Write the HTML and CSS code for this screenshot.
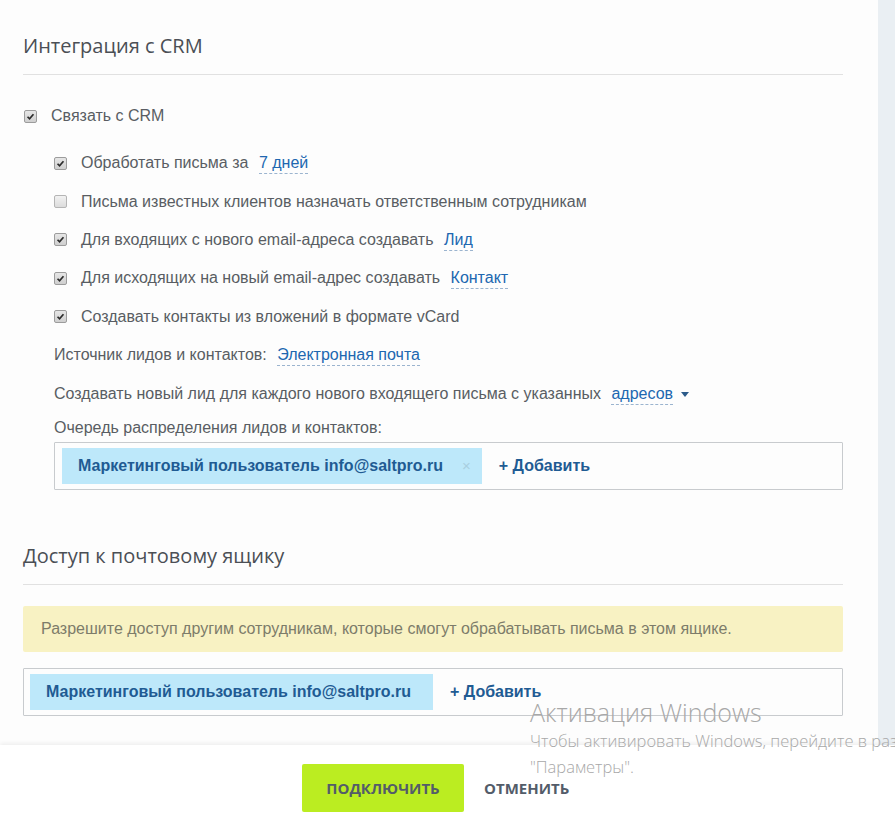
FILE: index.html
```html
<!DOCTYPE html>
<html lang="ru">
<head>
<meta charset="utf-8">
<title>Интеграция с CRM</title>
<link rel="stylesheet" href="styles.css">
</head>
<body>
<div class="page">
  <div class="top">
    <main class="content">
      <h2 class="section-title">Интеграция с CRM</h2>

      <div class="row main-row">
        <span class="cb checked"><svg viewBox="0 0 13 13"><path d="M3 6.8 L5.4 9.2 L10 3.8" /></svg></span>
        <span>Связать с CRM</span>
      </div>

      <div class="sub">
        <div class="row">
          <span class="cb checked"><svg viewBox="0 0 13 13"><path d="M3 6.8 L5.4 9.2 L10 3.8" /></svg></span>
          <span>Обработать письма за <a class="link">7 дней</a></span>
        </div>
        <div class="row">
          <span class="cb"></span>
          <span>Письма известных клиентов назначать ответственным сотрудникам</span>
        </div>
        <div class="row">
          <span class="cb checked"><svg viewBox="0 0 13 13"><path d="M3 6.8 L5.4 9.2 L10 3.8" /></svg></span>
          <span>Для входящих с нового email-адреса создавать <a class="link">Лид</a></span>
        </div>
        <div class="row">
          <span class="cb checked"><svg viewBox="0 0 13 13"><path d="M3 6.8 L5.4 9.2 L10 3.8" /></svg></span>
          <span>Для исходящих на новый email-адрес создавать <a class="link">Контакт</a></span>
        </div>
        <div class="row">
          <span class="cb checked"><svg viewBox="0 0 13 13"><path d="M3 6.8 L5.4 9.2 L10 3.8" /></svg></span>
          <span>Создавать контакты из вложений в формате vCard</span>
        </div>
      </div>

      <div class="plain">
        <div class="row">
          <span>Источник лидов и контактов: <a class="link">Электронная почта</a></span>
        </div>
        <div class="row">
          <span>Создавать новый лид для каждого нового входящего письма с указанных <a class="link">адресов</a><span class="caret"></span></span>
        </div>
        <div class="label">Очередь распределения лидов и контактов:</div>
        <div class="tagbox">
          <span class="tag">Маркетинговый пользователь info@saltpro.ru<span class="tag-x">×</span></span>
          <a class="add">+ Добавить</a>
        </div>
      </div>

      <h2 class="section-title second">Доступ к почтовому ящику</h2>
      <div class="notice">Разрешите доступ другим сотрудникам, которые смогут обрабатывать письма в этом ящике.</div>
      <div class="tagbox wide">
        <span class="tag plain-tag">Маркетинговый пользователь info@saltpro.ru</span>
        <a class="add">+ Добавить</a>
      </div>
    </main>
    <aside class="strip"></aside>
  </div>
  <footer class="footer">
    <button class="btn-primary">ПОДКЛЮЧИТЬ</button>
    <button class="btn-link">ОТМЕНИТЬ</button>
  </footer>
  <div class="watermark">
    <div class="wm-title">Активация Windows</div>
    <div class="wm-text">Чтобы активировать Windows, перейдите в раздел<br>"Параметры".</div>
  </div>
</div>
</body>
</html>
```

FILE: styles.css
```css
html, body {
  margin: 0;
  padding: 0;
  background: #fff;
}
body {
  font-family: "Liberation Sans", Arial, sans-serif;
  font-size: 16px;
  color: #595d63;
  overflow: hidden;
}
.page {
  position: relative;
  width: 895px;
  height: 826px;
  display: flex;
  flex-direction: column;
  overflow: hidden;
}
.top {
  display: flex;
  height: 745px;
}
.content {
  flex: 1;
  padding: 34px 35px 0 23px;
  background: #fdfdfd;
}
.strip {
  width: 17px;
  background: #eaeff3;
}
.section-title {
  margin: 0;
  font-family: "Open Sans", sans-serif;
  font-weight: 400;
  font-size: 20px;
  line-height: 24px;
  color: #4b4f55;
  padding-bottom: 16px;
  border-bottom: 1px solid #e1e1e1;
}
.section-title.second {
  margin-top: 54px;
}
.row {
  display: flex;
  align-items: center;
  height: 38.4px;
  white-space: nowrap;
}
.main-row {
  margin-top: 22px;
  height: 38px;
}
.main-row .cb {
  margin-left: 1px;
  margin-right: 14px;
}
.sub {
  margin-top: 9px;
  padding-left: 31px;
}
.cb {
  width: 11px;
  height: 11px;
  border: 1px solid #b5b5b5;
  border-radius: 2px;
  background: linear-gradient(#f2f2f2, #dcdcdc);
  margin-right: 14px;
  flex: none;
  display: flex;
  align-items: center;
  justify-content: center;
}
.cb svg {
  width: 11px;
  height: 11px;
}
.cb svg path {
  fill: none;
  stroke: #2b2b2b;
  stroke-width: 2;
}
.cb.checked {
  background: linear-gradient(#e6e6e6, #cfcfcf);
  border-color: #9c9c9c;
}
.link {
  color: #2067b0;
  border-bottom: 1px dashed #9bb4cf;
  padding-bottom: 2px;
  margin-left: 6px;
}
.caret {
  display: inline-block;
  width: 0;
  height: 0;
  border-left: 4px solid transparent;
  border-right: 4px solid transparent;
  border-top: 5px solid #2c5b8a;
  margin-left: 8px;
  vertical-align: middle;
}
.plain {
  padding-left: 31px;
}
.label {
  line-height: 20px;
  margin-top: 5px;
}
.tagbox {
  margin-top: 4px;
  border: 1px solid #c8cbce;
  border-radius: 1px;
  padding: 5px 7px;
  display: flex;
  align-items: center;
  height: 36px;
}
.tag {
  display: flex;
  align-items: center;
  height: 36px;
  background: #bde8fa;
  color: #1f5b93;
  font-weight: 700;
  padding: 0 16px;
}
.tag-x {
  color: #a9cfe0;
  font-weight: 400;
  font-size: 15px;
  margin-left: 19px;
  margin-right: -5px;
}
.add {
  color: #1f5b93;
  font-weight: 700;
  margin-left: 17px;
}
.notice {
  margin-top: 21px;
  background: #f8f2c3;
  border-radius: 2px;
  height: 46px;
  display: flex;
  align-items: center;
  padding-left: 18px;
  color: #7d7c6a;
}
.tagbox.wide {
  margin-top: 16px;
  padding: 5px 6px;
}
.plain-tag {
  padding: 0 16px;
  width: 371px;
}
.footer {
  height: 81px;
  background: #fff;
  box-shadow: 0 -2px 4px rgba(0, 0, 0, 0.06);
  display: flex;
  align-items: flex-start;
  padding: 19px 0 0 302px;
  box-sizing: border-box;
  position: relative;
}
.btn-primary {
  width: 162px;
  height: 48px;
  border: none;
  border-radius: 2px;
  background: #bbed21;
  color: #535c69;
  font-family: "Open Sans", sans-serif;
  font-weight: 700;
  font-size: 15px;
}
.btn-link {
  height: 48px;
  border: none;
  background: none;
  color: #535c69;
  font-family: "Open Sans", sans-serif;
  font-weight: 700;
  font-size: 15px;
  margin-left: 14px;
  padding: 0 6px;
}
.watermark {
  position: absolute;
  left: 530px;
  top: 696px;
  color: #a8a8a8;
  font-family: "Open Sans", sans-serif;
  white-space: nowrap;
  pointer-events: none;
}
.wm-title {
  font-size: 25px;
  line-height: 32px;
  font-weight: 300;
}
.wm-text {
  font-size: 16.5px;
  line-height: 26px;
  font-weight: 300;
}
```
